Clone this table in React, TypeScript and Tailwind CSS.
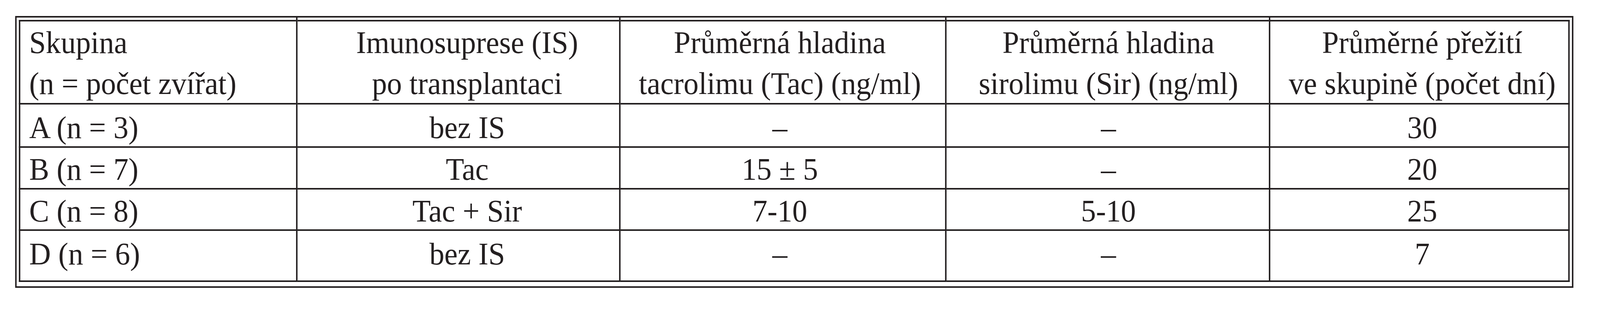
import { useEffect, useState } from 'react';

const ink = 'border-[#231f20]';
const REF_WIDTH = 4329;

type Row = {
  cells: string[];
  h: string;
  pt: string;
};

const rows: Row[] = [
  { cells: ['A (n = 3)', 'bez IS', '–', '–', '30'], h: 'h-[111px]', pt: 'pt-[15px]' },
  { cells: ['B (n = 7)', 'Tac', '15 ± 5', '–', '20'], h: 'h-[107px]', pt: 'pt-[11px]' },
  { cells: ['C (n = 8)', 'Tac + Sir', '7-10', '5-10', '25'], h: 'h-[106px]', pt: 'pt-[11px]' },
  { cells: ['D (n = 6)', 'bez IS', '–', '–', '7'], h: 'h-[131px]', pt: 'pt-[15px]' },
];

const headers: [string, string][] = [
  ['Skupina', '(n = počet zvířat)'],
  ['Imunosuprese (IS)', 'po transplantaci'],
  ['Průměrná hladina', 'tacrolimu (Tac) (ng/ml)'],
  ['Průměrná hladina', 'sirolimu (Sir) (ng/ml)'],
  ['Průměrné přežití', 've skupině (počet dní)'],
];

// per-column alignment nudges, measured from the scan
const align = [
  'text-left pl-[24px]',
  'text-center pl-[48px]',
  'text-center pr-[16px]',
  'text-center pl-[4px]',
  'text-center pl-[16px]',
];

function edge(col: number) {
  if (col === 0) return `border-l-4 ${ink}`;
  if (col === 4) return `border-r-4 ${ink}`;
  return '';
}

// the page is laid out for a 4329px wide sheet; squeeze it horizontally
// when the window is narrower so nothing falls off the right edge
function useFitScale() {
  const [k, setK] = useState(() =>
    typeof window === 'undefined' ? 1 : Math.min(1, window.innerWidth / REF_WIDTH)
  );
  useEffect(() => {
    const onResize = () => setK(Math.min(1, window.innerWidth / REF_WIDTH));
    onResize();
    window.addEventListener('resize', onResize);
    return () => window.removeEventListener('resize', onResize);
  }, []);
  return k;
}

export default function App() {
  const k = useFitScale();

  return (
    <div className="w-screen h-[800px] overflow-hidden bg-white">
      <div
        className="w-[4329px] h-[800px] origin-top-left bg-white pt-[41px] pl-[41px] text-[#231f20] [font-family:'Liberation_Serif','Times_New_Roman',serif]"
        style={{ transform: `scaleX(${k})` }}
      >
        <div className={`w-[4216px] border-4 ${ink} px-[6px] pb-[11px]`}>
          <div className="grid grid-cols-[754px_874px_882px_876px_810px] text-[81px]">
            {/* Header row: column rules run up through the double-border gap */}
            {headers.map((lines, i) => (
              <div key={i} className={`flex flex-col ${i < 4 ? `border-r-4 ${ink}` : ''}`}>
                <div className="h-[6px]" />
                <div
                  className={`h-[217px] border-t-4 border-b-4 ${ink} ${edge(i)} pt-[2px] leading-[105px] whitespace-nowrap ${align[i]}`}
                >
                  {lines[0]}
                  <br />
                  {lines[1]}
                </div>
              </div>
            ))}

            {/* Body rows */}
            {rows.map((row, r) =>
              row.cells.map((text, c) => (
                <div
                  key={`${r}-${c}`}
                  className={`${row.h} ${row.pt} border-b-4 ${ink} ${c < 4 ? 'border-r-4' : ''} ${edge(c)} leading-[88px] whitespace-nowrap ${align[c]}`}
                >
                  {text}
                </div>
              ))
            )}
          </div>
        </div>
      </div>
    </div>
  );
}
